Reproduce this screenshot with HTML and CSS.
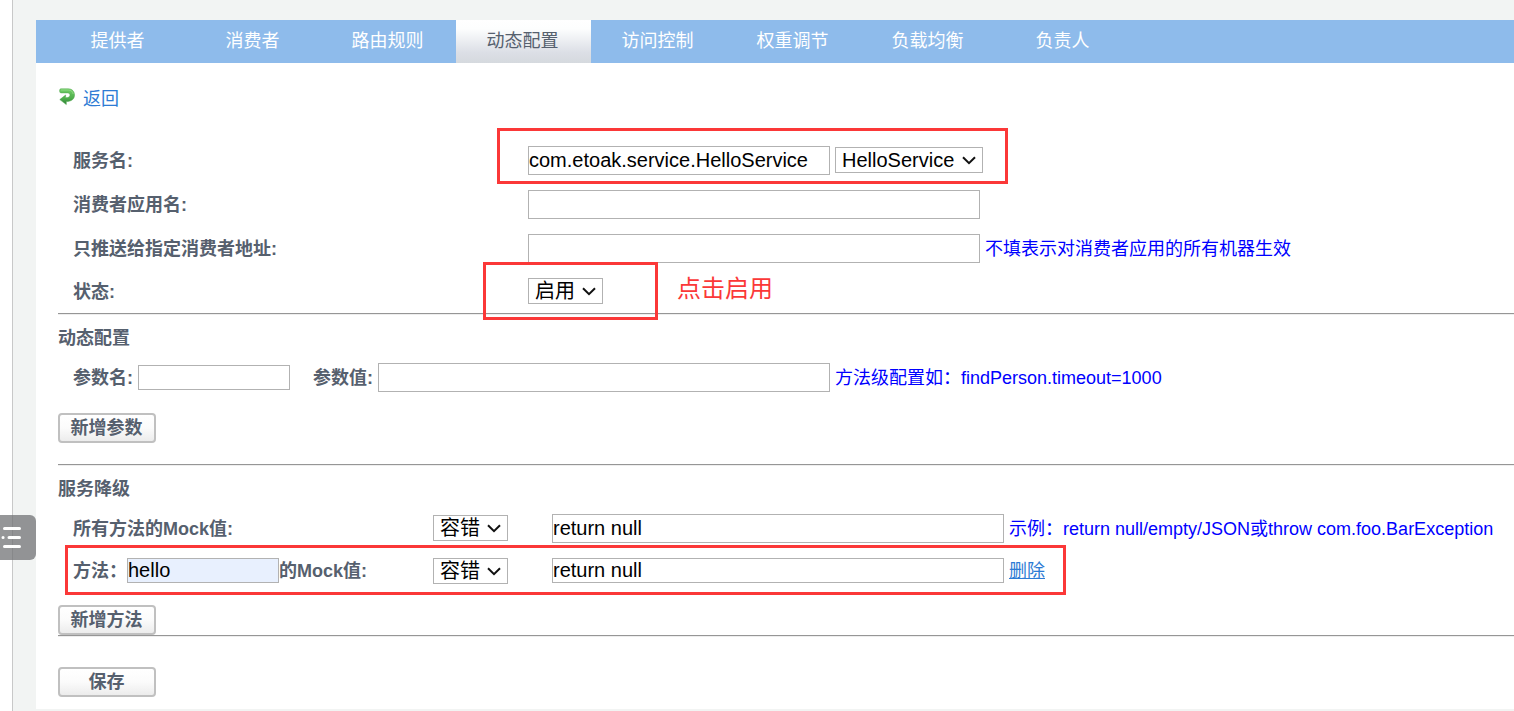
FILE: index.html
```html
<!DOCTYPE html>
<html lang="zh-CN">
<head>
<meta charset="utf-8">
<title>动态配置</title>
<link rel="stylesheet" href="styles.css">
</head>
<body>
<div class="page">
  <div class="gutter"></div>
  <main class="main">
    <nav class="nav">
      <a class="tab">提供者</a><a class="tab">消费者</a><a class="tab">路由规则</a><a class="tab active">动态配置</a><a class="tab">访问控制</a><a class="tab">权重调节</a><a class="tab">负载均衡</a><a class="tab">负责人</a>
    </nav>
    <form class="content">
      <div class="back">
        <svg class="back-icon" width="17" height="18" viewBox="0 0 17 18">
          <defs><linearGradient id="g" x1="0" y1="0" x2="0" y2="1"><stop offset="0" stop-color="#72cf68"/><stop offset=".6" stop-color="#4fae4c"/><stop offset="1" stop-color="#2c7f35"/></linearGradient></defs>
          <path d="M2 .8H9.3C13.2 .8 15.5 3.6 15.5 7C15.5 11 12.6 13.5 7.3 13.5V16.6L.8 11.6L6.6 7V9.7C9.8 9.7 11 8.7 11 7.1C11 5.5 9.8 4.9 8.2 4.9H2C1 4.9 .6 4 .6 2.8C.6 1.5 1 .8 2 .8Z" fill="url(#g)" stroke="#4ba548" stroke-width=".5"/>
          <path d="M1.8 2H9.3C12 2 13.8 3.6 14.2 6" fill="none" stroke="#98dc8c" stroke-width=".8"/>
        </svg>
        <a class="link">返回</a>
      </div>

      <div class="row"><label class="name">服务名:</label><span class="input service">com.etoak.service.HelloService</span><span class="select service-select">HelloService<svg class="chev" viewBox="0 0 14 9"><path d="M1 1.2L7 7.2L13 1.2"/></svg></span></div>
      <div class="row"><label class="name">消费者应用名:</label><span class="input long"></span></div>
      <div class="row"><label class="name">只推送给指定消费者地址:</label><span class="input long"></span><span class="hint">不填表示对消费者应用的所有机器生效</span></div>
      <div class="row status"><label class="name">状态:</label><span class="select">启用<svg class="chev" viewBox="0 0 14 9"><path d="M1 1.2L7 7.2L13 1.2"/></svg></span></div>
      <hr class="line">

      <h2 class="title">动态配置</h2>
      <div class="row param"><label class="key">参数名:</label><span class="input short"></span><label class="key value-key">参数值:</label><span class="input long"></span><span class="hint">方法级配置如：findPerson.timeout=1000</span></div>
      <a class="button add-param">新增参数</a>
      <hr class="line">

      <h2 class="title">服务降级</h2>
      <div class="row mock"><label class="mock-name">所有方法的Mock值:</label><span class="select mode">容错<svg class="chev" viewBox="0 0 14 9"><path d="M1 1.2L7 7.2L13 1.2"/></svg></span><span class="input long">return null</span><span class="hint">示例：return null/empty/JSON或throw com.foo.BarException</span></div>
      <div class="row mock method"><label class="mock-name"><span class="caption">方法：</span><span class="input short filled">hello</span><span class="caption">的Mock值:</span></label><span class="select mode">容错<svg class="chev" viewBox="0 0 14 9"><path d="M1 1.2L7 7.2L13 1.2"/></svg></span><span class="input long slim">return null</span><a class="link remove">删除</a></div>
      <a class="button add-method">新增方法</a>
      <hr class="line">
      <a class="button save">保存</a>
    </form>
  </main>
</div>
<div class="mark mark-service"></div>
<div class="mark mark-status"></div>
<div class="mark mark-method"></div>
<div class="note">点击启用</div>
<div class="drawer"><svg width="36" height="45" viewBox="0 0 36 45"><path d="M4.5 13.5H19.5M9 22.5H19.5M4.5 31.5H19.5M3 22.5H3.1" fill="none" stroke="#fff" stroke-width="3" stroke-linecap="round"/></svg></div>
</body>
</html>
```
FILE: styles.css
```css
* { box-sizing: border-box; }
body {
  margin: 0;
  width: 1514px;
  height: 711px;
  position: relative;
  overflow: hidden;
  background: #f2f4f3;
  color: #56606e;
  font: 18px/29px "Liberation Sans", "Noto Sans CJK SC", sans-serif;
  white-space: nowrap;
}
.page { display: flex; height: 711px; }
.gutter { width: 13px; background: #fff; border-right: 1px solid #c8c8c8; }
.main { flex: 1; padding: 20px 0 2px 23px; display: flex; flex-direction: column; min-width: 0; }
.nav { display: flex; height: 43px; padding-left: 15px; background: #8ebbeb; }
.tab { width: 135px; padding-right: 2px; line-height: 42px; text-align: center; color: #fff; }
.tab.active { color: #56606e; background: linear-gradient(#fff, #fdfefe 20%, #dcdfe6 75%, #d5d9de); }
.content { flex: 1; padding-left: 22px; background: #fff; overflow: hidden; }
.back { display: flex; height: 76px; padding-top: 22px; }
.back-icon { margin: 3px 7px 0 1px; }
.link { color: #2d7bd4; }
.row { display: flex; align-items: center; height: 43px; margin-bottom: 1px; padding-left: 15px; }
.name { width: 455px; padding-top: 2px; font-weight: bold; }
.key { font-weight: bold; width: 65px; padding-top: 2px; }
.value-key { margin-left: 23px; }
.input {
  display: block;
  height: 29px;
  border: 1px solid #b2b2b2;
  background: #fff;
  color: #000;
  font-weight: normal;
  font-size: 20px;
  line-height: 26px;
}
.service { width: 302px; }
.long { width: 452px; }
.short { width: 152px; height: 25px; line-height: 22px; }
.slim { height: 25px; line-height: 22px; }
.filled { background: #e8f0fe; }
.select {
  display: flex;
  align-items: center;
  width: 75px;
  height: 26px;
  margin-bottom: 2px;
  border: 1px solid #b2b2b2;
  padding-left: 6px;
  background: #fff;
  color: #000;
  font-size: 20px;
  line-height: 24px;
}
.service-select { width: 148px; margin: 0 0 1px 5px; }
.chev { width: 14px; height: 9px; margin: 1px 6px 0 auto; fill: none; stroke: #111; stroke-width: 2; }
.hint { margin-left: 5px; padding-top: 2px; color: #00f; }
.status { height: 42px; margin: 0; }
.status .name { padding-top: 0; }
.line { margin: 0; height: 2px; border: 0; border-top: 1px solid #969696; border-bottom: 1px solid #eee; }
.title { margin: 0; height: 41px; padding-top: 8px; font-size: 18px; line-height: 30px; }
.param { height: 43px; margin: 0; }
.button {
  display: block;
  width: 98px;
  height: 30px;
  border: 2px solid #c0c0c0;
  border-radius: 4px;
  padding-right: 1px;
  background: linear-gradient(#fff, #fbfbfb 50%, #ececec);
  font-weight: bold;
  line-height: 27px;
  text-align: center;
}
.add-param { margin: 14px 0 21px; }
.mock { margin: 0; }
.mock-name { display: flex; align-items: center; width: 360px; padding-top: 2px; font-weight: bold; line-height: 25px; }
.method .mock-name { padding-top: 0; }
.caption { padding-top: 2px; }
.mode { margin-right: 44px; }
.method { height: 41px; }
.method .mode { margin-bottom: 0; }
.remove { margin-left: 5px; padding-top: 2px; text-decoration: underline; }
.add-method { margin-top: 14px; }
.save { margin-top: 30px; }
.mark { position: absolute; border: 3px solid #fb3838; }
.mark-service { left: 497px; top: 128px; width: 511px; height: 56px; }
.mark-status { left: 483px; top: 262px; width: 175px; height: 58px; }
.mark-method { left: 65px; top: 545px; width: 1001px; height: 50px; }
.note { position: absolute; left: 677px; top: 271px; color: #fb3838; font-size: 24px; line-height: 36px; }
.drawer { position: absolute; left: 0; top: 515px; width: 36px; height: 45px; border-radius: 0 6px 6px 0; background: rgba(112, 113, 116, .74); }
```
